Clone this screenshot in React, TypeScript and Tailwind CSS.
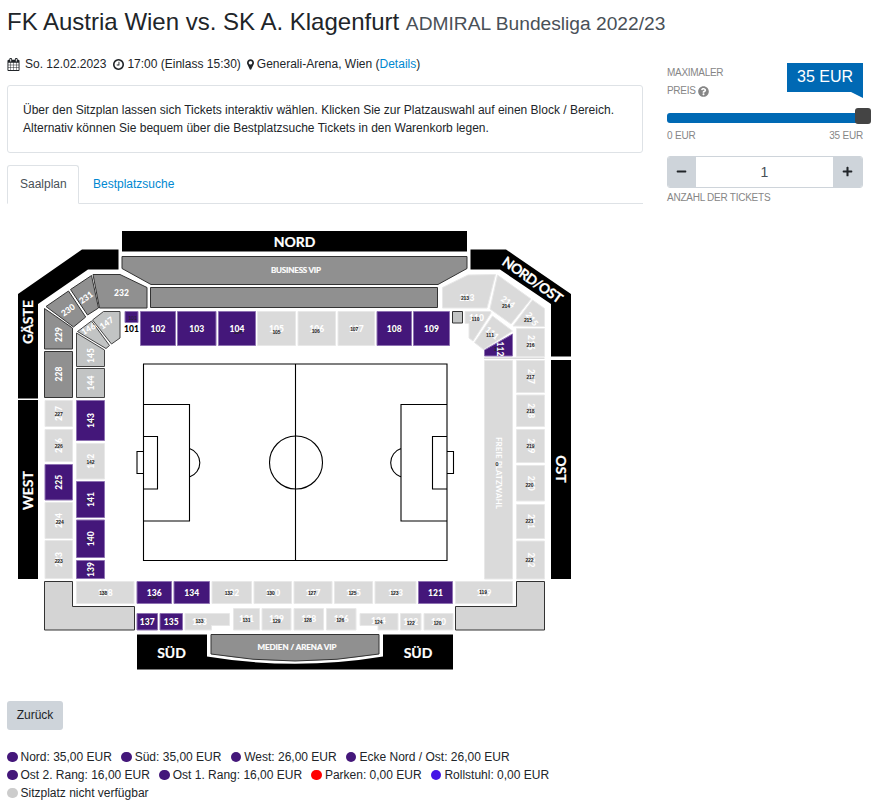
import { useState } from 'react';
import { FaMinus, FaPlus, FaQuestionCircle } from 'react-icons/fa';

type Status = 'free' | 'sold' | 'vip' | 'guest';

interface Block {
  id: string;
  points: string;
  status: Status;
  x: number;
  y: number;
  rotate?: number;
  // position of the small seat marker, relative to the label
  dx?: number;
  dy?: number;
}

const fills: Record<Status, string> = {
  free: '#44177a',
  sold: '#dadada',
  vip: '#909090',
  guest: '#c2c4c4',
};

const strokes: Record<Status, string> = {
  free: '#8e72b2',
  sold: '#e8e8e8',
  vip: '#333333',
  guest: '#444444',
};

const rect = (x1: number, y1: number, x2: number, y2: number) => `${x1},${y1} ${x2},${y1} ${x2},${y2} ${x1},${y2}`;

const row = (id: string, x1: number, y1: number, x2: number, y2: number, status: Status, dx = 0, dy = 0, rotate = 0): Block => ({
  id,
  points: rect(x1, y1, x2, y2),
  status,
  x: (x1 + x2) / 2,
  y: (y1 + y2) / 2,
  rotate,
  dx,
  dy,
});

const blocks: Block[] = [
  // Nord
  row('102', 140.5, 311.5, 175.5, 345.5, 'free', 0, 2),
  row('103', 177.5, 311.5, 216, 345.5, 'free', 0, 1),
  row('104', 218.5, 311.5, 255.5, 345.5, 'free', 1, 3),
  row('105', 257.5, 311.5, 295.5, 345.5, 'sold', 0, 3),
  row('106', 298, 311.5, 335.5, 345.5, 'sold', -1, 2),
  row('107', 338, 311.5, 374.5, 345.5, 'sold', -2, 0),
  row('108', 377, 311.5, 411.5, 345.5, 'free', 0, 1),
  row('109', 413.5, 311.5, 449.5, 345.5, 'free', 1, 1),

  // Gäste
  { id: '232', points: '93,274.5 120,274.5 147,287.5 147,308 99.5,308', status: 'vip', x: 121.5, y: 293 },
  { id: '231', points: '70.5,289.5 91.5,275.5 98.5,308 87.5,315', status: 'vip', x: 86, y: 297.5, rotate: -35 },
  { id: '230', points: '46,306.5 68.5,291 85.7,317 73.5,327', status: 'vip', x: 68, y: 310, rotate: -35 },
  { id: '229', points: '44.5,308.5 72.5,328 72.5,349 44.5,349', status: 'vip', x: 58.5, y: 334.5, rotate: -90 },
  { id: '228', points: rect(44.5, 351.5, 72.5, 397.5), status: 'vip', x: 58.5, y: 374, rotate: -90 },
  { id: '147', points: '92.5,320 103.5,311.5 120,311.5 120,338 111.5,344', status: 'guest', x: 106.5, y: 323, rotate: -35 },
  { id: '146', points: '77.5,331.5 91.5,321 109.5,345.5 106,348.5', status: 'guest', x: 88.5, y: 329, rotate: -30 },
  { id: '145', points: '76.5,333 104.5,350 104.5,366.5 76.5,366.5', status: 'guest', x: 90.5, y: 355.5, rotate: -90 },
  { id: '144', points: rect(76.5, 368.5, 104.5, 397.5), status: 'guest', x: 90.5, y: 383, rotate: -90 },

  // Ecke Nord / Ost
  { id: '213', points: '442.5,287.5 468,275 495.5,274.5 487,308 442.5,308', status: 'sold', x: 467, y: 297.5, dx: -2, dy: 0 },
  { id: '214', points: '497.5,275 531,299 511,324 490,309', status: 'sold', x: 508, y: 302, rotate: 35, dx: -2, dy: 4 },
  { id: '215', points: '532.5,300 544.5,308.5 544.5,326.5 513,326', status: 'sold', x: 532, y: 319, rotate: 55, dx: -4, dy: 1 },
  row('216', 516.5, 328.5, 544.5, 356.5, 'sold', 0, 2, 90),
  { id: '110', points: '465,311.5 490.5,311.5 491,313 473,341 469,338 469,323.5 465,323.5', status: 'sold', x: 476.5, y: 318, dx: -1, dy: 1 },
  { id: '111', points: '492.5,316 512.5,331 483.5,349.5 474.5,342.5', status: 'sold', x: 492, y: 333, rotate: 40, dx: -2, dy: 2 },
  { id: '112', points: '512.5,334 512.5,356 484.5,356 484.5,350', status: 'free', x: 500, y: 349, rotate: 90, dx: -2, dy: 0 },

  // Ost
  row('217', 516.5, 360.5, 544.5, 392.5, 'sold', 0, 0, 90),
  row('218', 516.5, 395, 544.5, 426.5, 'sold', 0, 0, 90),
  row('219', 516.5, 429.5, 544.5, 462.5, 'sold', 0, 0, 90),
  row('220', 516.5, 465.5, 544.5, 501, 'sold', -1, 2, 90),
  row('221', 516.5, 504.5, 544.5, 538.5, 'sold', -1, -1, 90),
  row('222', 516.5, 541, 544.5, 579, 'sold', -1, 0, 90),

  // West
  row('227', 45, 400.5, 72.5, 426.5, 'sold', 0, 0, -90),
  row('226', 45, 429.5, 72.5, 461.5, 'sold', 0, 0, -90),
  row('225', 45, 464.5, 72.5, 500, 'free', 0, 0, -90),
  row('224', 45, 502.5, 72.5, 538.5, 'sold', 1, 1, -90),
  row('223', 45, 540.5, 72.5, 578.5, 'sold', 0, 1, -90),
  row('143', 76.5, 400.5, 104.5, 440.5, 'free', 0, 0, -90),
  row('142', 76.5, 443.5, 104.5, 479, 'sold', 0, 1, -90),
  row('141', 76.5, 481.5, 104.5, 517.5, 'free', -1, 0, -90),
  row('140', 76.5, 520, 104.5, 557.5, 'free', -1, 0, -90),
  row('139', 76.5, 560.5, 104.5, 578.5, 'free', 0, 0, -90),

  // Süd
  row('138', 76.5, 581.5, 134, 603.5, 'sold', -2, 0),
  row('136', 137, 581.5, 171.5, 603.5, 'free', -1, 4),
  row('134', 174, 581.5, 209.5, 603.5, 'free', 0, 1),
  row('132', 212, 581.5, 251.5, 603.5, 'sold', -3, 0),
  row('130', 254, 581.5, 291.5, 603.5, 'sold', -2, 0),
  row('127', 294, 581.5, 332, 603.5, 'sold', -1, 0),
  row('125', 334.5, 581.5, 372.5, 603.5, 'sold', -1, 0),
  row('123', 375, 581.5, 416, 603.5, 'sold', -1, 0),
  row('121', 418.5, 581.5, 452.5, 603.5, 'free', 0, 1),
  row('119', 455.5, 581.5, 512.5, 603.5, 'sold', -1, -1),
  row('137', 137, 613.5, 157.5, 630, 'free', 0, 0),
  row('135', 160, 613.5, 182.5, 630, 'free', -1, 1),
  { id: '133', points: '185,613.5 229.5,613.5 229.5,625.5 211.5,625.5 211.5,630 185,630', status: 'sold', x: 199.5, y: 621.5, dx: 0, dy: -1 },
  row('131', 233.5, 608.5, 259.5, 630, 'sold', 0, 1),
  row('129', 262, 608.5, 291, 630, 'sold', 0, 2),
  row('128', 294, 608.5, 323.5, 630, 'sold', -1, 1),
  row('126', 326.5, 608.5, 356, 630, 'sold', -1, 1),
  { id: '124', points: '360,613.5 398,613.5 398,630 378,630 378,625.5 360,625.5', status: 'sold', x: 378.5, y: 620.5, dx: 0, dy: 1 },
  row('122', 400.5, 613.5, 421, 630, 'sold', 0, 1),
  row('120', 424, 613.5, 453, 630, 'sold', -1, 1),
];

const legend = [
  [
    { color: 'bg-[#44177a]', label: 'Nord: 35,00 EUR' },
    { color: 'bg-[#44177a]', label: 'Süd: 35,00 EUR' },
    { color: 'bg-[#44177a]', label: 'West: 26,00 EUR' },
    { color: 'bg-[#44177a]', label: 'Ecke Nord / Ost: 26,00 EUR' },
  ],
  [
    { color: 'bg-[#44177a]', label: 'Ost 2. Rang: 16,00 EUR' },
    { color: 'bg-[#44177a]', label: 'Ost 1. Rang: 16,00 EUR' },
    { color: 'bg-[#ff0000]', label: 'Parken: 0,00 EUR' },
    { color: 'bg-[#4415e6]', label: 'Rollstuhl: 0,00 EUR' },
  ],
  [{ color: 'bg-[#cccccc]', label: 'Sitzplatz nicht verfügbar' }],
];

function CalendarIcon() {
  return (
    <svg viewBox="0 0 1792 1792" className="w-[13px] h-[13px] shrink-0" fill="currentColor">
      <path d="M192 1664h288v-288h-288v288zm352 0h320v-288h-320v288zm-352-352h288v-320h-288v320zm352 0h320v-320h-320v320zm-352-384h288v-288h-288v288zm736 736h320v-288h-320v288zm-384-736h320v-288h-320v288zm768 736h288v-288h-288v288zm-384-352h320v-320h-320v320zm-352-864v-288q0-13-9.5-22.5t-22.5-9.5h-64q-13 0-22.5 9.5t-9.5 22.5v288q0 13 9.5 22.5t22.5 9.5h64q13 0 22.5-9.5t9.5-22.5zm736 864h288v-320h-288v320zm-384-384h320v-288h-320v288zm384 0h288v-288h-288v288zm32-480v-288q0-13-9.5-22.5t-22.5-9.5h-64q-13 0-22.5 9.5t-9.5 22.5v288q0 13 9.5 22.5t22.5 9.5h64q13 0 22.5-9.5t9.5-22.5zm384-64v1280q0 52-38 90t-90 38h-1408q-52 0-90-38t-38-90v-1280q0-52 38-90t90-38h128v-96q0-66 47-113t113-47h64q66 0 113 47t47 113v96h384v-96q0-66 47-113t113-47h64q66 0 113 47t47 113v96h128q52 0 90 38t38 90z" />
    </svg>
  );
}

function ClockIcon() {
  return (
    <svg viewBox="128 128 1536 1536" className="w-[11px] h-[11px] shrink-0" fill="currentColor">
      <path d="M1024 544v448q0 14-9 23t-23 9h-320q-14 0-23-9t-9-23v-64q0-14 9-23t23-9h224v-352q0-14 9-23t23-9h64q14 0 23 9t9 23zm416 352q0-148-73-273t-198-198-273-73-273 73-198 198-73 273 73 273 198 198 273 73 273-73 198-198 73-273zm224 0q0 209-103 385.5t-279.5 279.5-385.5 103-385.5-103-279.5-279.5-103-385.5 103-385.5 279.5-279.5 385.5-103 385.5 103 279.5 279.5 103 385.5z" />
    </svg>
  );
}

function MarkerIcon() {
  return (
    <svg viewBox="384 128 1024 1536" className="w-[7px] h-[11px] shrink-0" fill="currentColor">
      <path d="M1152 640q0-106-75-181t-181-75-181 75-75 181 75 181 181 75 181-75 75-181zm256 0q0 109-33 179l-364 774q-16 33-47.5 52t-67.5 19-67.5-19-46.5-52l-365-774q-33-70-33-179 0-212 150-362t362-150 362 150 150 362z" />
    </svg>
  );
}

function BlockShape({ block }: { block: Block }) {
  const { id, points, status, x, y, rotate = 0, dx = 0, dy = 0 } = block;
  const marker = (
    <text x={x + dx} y={y + dy + 2} fontSize="5" fontWeight="700" fill="#222222" textLength="8" className="font-['Liberation_Sans',sans-serif]">
      {id}
    </text>
  );

  return (
    <g className="cursor-pointer">
      <polygon points={points} fill={fills[status]} stroke={strokes[status]} />
      {status === 'free' && marker}
      <text x={x} y={y + 3} fontSize="8.5" fontWeight="900" fill="#ffffff" transform={`rotate(${rotate} ${x} ${y})`}>
        {id}
      </text>
      {status === 'sold' && marker}
    </g>
  );
}

function SeatMap() {
  return (
    <svg viewBox="7 222 636 460" width="636" height="460" textAnchor="middle" className="block font-[Lato,sans-serif]">
      {/* Outer stands */}
      <g fill="#000000">
        <polygon points={rect(122, 231, 467, 251.5)} />
        <polygon points="18,294 82,249.5 118.5,249.5 118.5,269.5 88,269.5 38,304 38,398.5 18,398.5" />
        <polygon points={rect(18, 400, 38, 579)} />
        <polygon points="470.5,249.5 506,249.5 571,294 571,356.5 551,356.5 551,304 500,269.5 470.5,269.5" />
        <polygon points={rect(551, 360, 571, 579)} />
        <path d="M137 634.5H207V656.5Q295 671 383 656.5V634.5H453V669.5H137Z" />
      </g>

      {/* VIP areas */}
      <g fill="#909090" stroke="#333333">
        <polygon points="122,256.5 467,256.5 467,268.5 438,284.5 151,284.5 122,268.5" />
        <polygon points={rect(150.5, 287.5, 437.5, 307.5)} />
        <path d="M211 634.5H379V654Q295 668 211 654Z" />
      </g>
      <g fill="#d4d4d4" stroke="#333333">
        <polygon points="44.5,581.5 72.5,581.5 72.5,606.5 134.5,606.5 134.5,630 44.5,630" />
        <polygon points="455.5,606.5 516.5,606.5 516.5,581.5 544.5,581.5 544.5,630 455.5,630" />
      </g>
      <polygon points={rect(452.5, 311.5, 462.5, 323)} fill="#c2c4c4" stroke="#333333" />

      {/* Pitch */}
      <g fill="none" stroke="#000000" strokeWidth="1.1">
        <path d="M143.5 364H447V560.5H143.5ZM295.5 364V560.5" />
        <circle cx="296" cy="462.5" r="26.5" />
        <path d="M143.5 404.5H189.5V521H143.5M143.5 436.5H157.5V489H143.5M143.5 451.5H137V473.5H143.5M189.5 448.5A15 15 0 0 1 189.5 477" />
        <path d="M447 404.5H401V521H447M447 436.5H432.5V489H447M447 451.5H453.5V473.5H447M401 448.5A15 15 0 0 0 401 477" />
      </g>

      <polygon points={rect(484, 357.5, 544.5, 359)} fill="#dadada" />
      <polygon points={rect(484.5, 360.5, 512.5, 579)} fill="#dadada" stroke="#e8e8e8" />
      <text x="498.5" y="475.5" fontSize="8" fontWeight="700" fill="#ffffff" transform="rotate(90 498.5 473)" textLength="72">
        FREIE PLATZWAHL
      </text>
      <text x="497" y="466" fontSize="5" fontWeight="700" fill="#222222">
        0
      </text>

      {blocks.map((block) => (
        <BlockShape key={block.id} block={block} />
      ))}

      <polygon points={rect(125, 311.5, 138, 322.5)} fill="#44177a" stroke="#8e72b2" />
      <text x="132.5" y="320" fontSize="5" fill="#222222">
        101
      </text>
      <text x="131.5" y="332" fontSize="8.5" fontWeight="900" fill="#000000">
        101
      </text>

      {/* Stand names */}
      <g fill="#ffffff" fontWeight="700" fontSize="14" stroke="#ffffff" strokeWidth="0.2">
        <text x="294.5" y="246.5">NORD</text>
        <text x="171.5" y="657.5">SÜD</text>
        <text x="418" y="657.5">SÜD</text>
        <text x="28" y="327" transform="rotate(-90 28 322)">GÄSTE</text>
        <text x="28" y="495.5" transform="rotate(-90 28 490.5)">WEST</text>
        <text x="561" y="474" transform="rotate(90 561 469)">OST</text>
        <text x="532.5" y="285" transform="rotate(35 532.5 280)" textLength="70">NORD/OST</text>
        <text x="296" y="273" fontSize="8" textLength="50">BUSINESS VIP</text>
        <text x="297" y="649.5" fontSize="8" textLength="79">MEDIEN / ARENA VIP</text>
      </g>
    </svg>
  );
}

export default function App() {
  const [count, setCount] = useState(1);

  return (
    <div className="w-[877px] h-[804px] overflow-hidden bg-white pl-[7px] text-xs leading-[18px] text-[#212529] font-['Liberation_Sans',Arial,sans-serif]">
      <h1 className="pt-[7px] h-[54px] text-2xl leading-[29px] whitespace-nowrap">
        FK Austria Wien vs. SK A. Klagenfurt <small className="text-[19.2px] text-[#495057]">ADMIRAL Bundesliga 2022/23</small>
      </h1>

      <div className="flex gap-6">
        <main className="w-[636px]">
          <div className="flex items-center pt-px whitespace-nowrap">
            <CalendarIcon />
            <span className="ml-[5px] mr-[7px]">So. 12.02.2023</span>
            <ClockIcon />
            <span className="ml-[3px] mr-[6px]">17:00 (Einlass 15:30)</span>
            <MarkerIcon />
            <span className="ml-[3px]">
              Generali-Arena, Wien (<a href="#" className="text-[#0088d1]">Details</a>)
            </span>
          </div>

          <div className="mt-3 h-[68px] rounded-[3px] border border-[#dee2e6] px-[15px] py-[15px] whitespace-nowrap">
            Über den Sitzplan lassen sich Tickets interaktiv wählen. Klicken Sie zur Platzauswahl auf einen Block / Bereich.
            <br />
            Alternativ können Sie bequem über die Bestplatzsuche Tickets in den Warenkorb legen.
          </div>

          <nav className="mt-3 flex h-[39px] border-b border-[#dee2e6]">
            <a href="#" className="-mb-px w-[72px] rounded-t-[3px] border border-b-white border-[#dee2e6] bg-white pl-3 pt-[9px] text-[#495057]">
              Saalplan
            </a>
            <a href="#" className="px-[14px] pt-[10px] text-[#0088d1]">
              Bestplatzsuche
            </a>
          </nav>

          <div className="mt-[18px]">
            <SeatMap />
          </div>

          <button className="mt-[19px] block h-[29px] w-14 rounded-[3px] bg-[#ced4da] pb-0.5 text-xs">Zurück</button>

          <div className="mt-[18px]">
            {legend.map((items, i) => (
              <div key={i} className="flex whitespace-nowrap">
                {items.map((item) => (
                  <span key={item.label} className="mr-[9.3px] flex items-center">
                    <span className={`mr-[3px] size-[10.5px] rounded-full ${item.color}`} />
                    {item.label}
                  </span>
                ))}
              </div>
            ))}
          </div>
        </main>

        <aside className="w-[196px] pt-[10px] text-[10px] text-[#868686]">
          <div className="flex h-[35px] justify-between tracking-[-0.3px]">
            <div>
              MAXIMALER
              <div className="flex items-center gap-0.5">
                PREIS <FaQuestionCircle className="size-[11px]" />
              </div>
            </div>
            <div className="relative -mt-px h-[29px] w-[76px] bg-[#0069b4] text-center text-base leading-[27px] tracking-normal text-white">
              35 EUR
              <svg viewBox="0 0 12 6" className="absolute top-[29px] right-0 h-1.5 w-3">
                <path d="M0 0H12V6Z" fill="#0069b4" />
              </svg>
            </div>
          </div>

          {/* Price slider */}
          <div className="relative mt-[14px] h-[10px] rounded-[3px] bg-[#0069b4]">
            <span className="absolute -top-[5px] -right-2 size-4 rounded-[3px] bg-[#444444]" />
          </div>
          <div className="mt-1 flex justify-between tracking-[-0.2px]">
            <span>0 EUR</span>
            <span>35 EUR</span>
          </div>

          <div className="mt-[11px] flex h-8 overflow-hidden rounded-[3px] border border-[#ced4da] text-sm text-[#212529]">
            <button onClick={() => setCount(Math.max(1, count - 1))} className="flex w-7 items-center justify-center bg-[#ced4da] pb-px pr-0.5">
              <FaMinus className="size-[11px]" />
            </button>
            <span className="flex flex-1 items-center justify-center text-[#495057]">{count}</span>
            <button onClick={() => setCount(count + 1)} className="flex w-[29px] items-center justify-center bg-[#ced4da] pb-px">
              <FaPlus className="size-[11px]" />
            </button>
          </div>
          <div className="mt-px tracking-[-0.25px]">ANZAHL DER TICKETS</div>
        </aside>
      </div>
    </div>
  );
}
